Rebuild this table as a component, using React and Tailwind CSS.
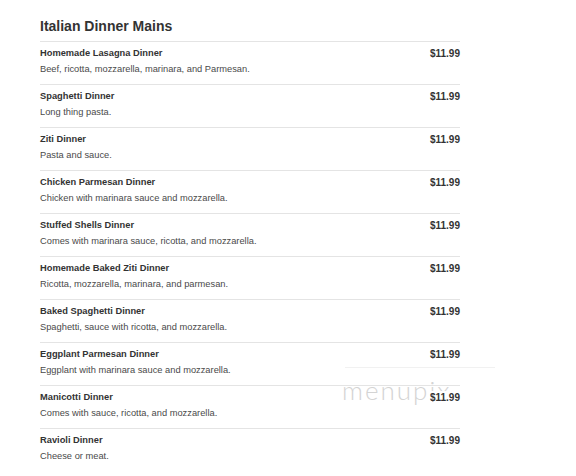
const items = [
  { name: "Homemade Lasagna Dinner", desc: "Beef, ricotta, mozzarella, marinara, and Parmesan." },
  { name: "Spaghetti Dinner", desc: "Long thing pasta." },
  { name: "Ziti Dinner", desc: "Pasta and sauce." },
  { name: "Chicken Parmesan Dinner", desc: "Chicken with marinara sauce and mozzarella." },
  { name: "Stuffed Shells Dinner", desc: "Comes with marinara sauce, ricotta, and mozzarella." },
  { name: "Homemade Baked Ziti Dinner", desc: "Ricotta, mozzarella, marinara, and parmesan." },
  { name: "Baked Spaghetti Dinner", desc: "Spaghetti, sauce with ricotta, and mozzarella." },
  { name: "Eggplant Parmesan Dinner", desc: "Eggplant with marinara sauce and mozzarella." },
  { name: "Manicotti Dinner", desc: "Comes with sauce, ricotta, and mozzarella." },
  { name: "Ravioli Dinner", desc: "Cheese or meat." },
];

export default function App() {
  return (
    <div
      className="relative w-[576px] h-[476px] bg-white overflow-hidden"
      style={{ fontFamily: '"Liberation Sans", Arial, sans-serif' }}
    >
      {/* watermark */}
      <div className="absolute left-[345px] top-[367px] w-[150px] h-px bg-[#f1f1f1]" />
      <div
        className="absolute left-[342px] top-[375px] text-[26px] leading-[30px] tracking-[2px] font-light text-[#d4d4d4]"
        style={{ fontFamily: 'Lato, "Open Sans", sans-serif' }}
      >
        menupix
      </div>

      <div className="relative ml-[40px] w-[420px] pt-[18px]">
        <h2 className="text-[14px] leading-[16px] font-bold text-[#333] mb-[7px]">
          Italian Dinner Mains
        </h2>
        {items.map((it) => (
          <div key={it.name} className="border-t border-[#e4e4e4] h-[43px] pt-[5px]">
            <div className="flex justify-between items-start">
              <div className="text-[9.3px] leading-[13px] font-bold text-[#333]">{it.name}</div>
              <div className="text-[10px] leading-[13px] font-bold text-[#333] bg-white pl-[2px]">
                $11.99
              </div>
            </div>
            <div className="mt-[3px] text-[9.3px] leading-[13px] text-[#4a4a4a]">{it.desc}</div>
          </div>
        ))}
      </div>
    </div>
  );
}
